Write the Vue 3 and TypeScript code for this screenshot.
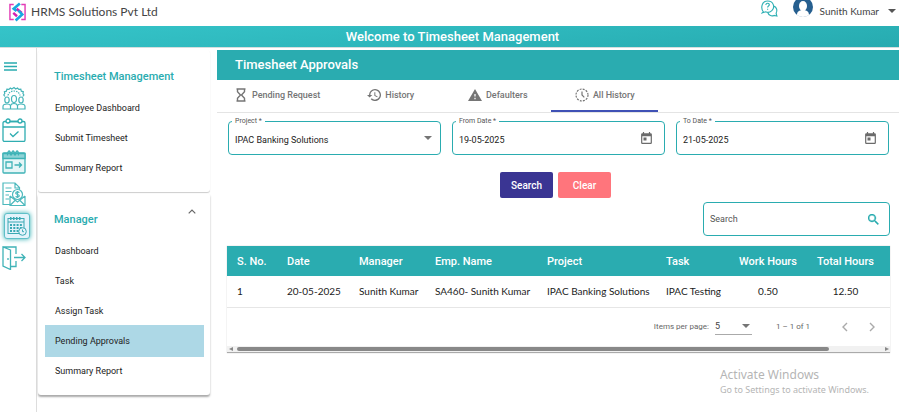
<script setup lang="ts">
import { ref } from 'vue'

interface Row {
  no: number
  date: string
  manager: string
  employee: string
  project: string
  task: string
  work: string
  total: string
}

const timesheetLinks: string[] = ['Employee Dashboard', 'Submit Timesheet', 'Summary Report']
const managerLinks: string[] = ['Dashboard', 'Task', 'Assign Task', 'Pending Approvals', 'Summary Report']
const activeLink = ref('Pending Approvals')
const tabs: string[] = ['Pending Request', 'History', 'Defaulters', 'All History']
const activeTab = ref('All History')
const project = ref('IPAC Banking Solutions')
const fromDate = ref('19-05-2025')
const toDate = ref('21-05-2025')
const query = ref('')
const pageSize = ref('5')
const columns: string[] = ['S. No.', 'Date', 'Manager', 'Emp. Name', 'Project', 'Task', 'Work Hours', 'Total Hours']
const rows: Row[] = [
  {
    no: 1,
    date: '20-05-2025',
    manager: 'Sunith Kumar',
    employee: 'SA460- Sunith Kumar',
    project: 'IPAC Banking Solutions',
    task: 'IPAC Testing',
    work: '0.50',
    total: '12.50',
  },
]

function clearFilters(): void {
  project.value = ''
  fromDate.value = ''
  toDate.value = ''
}
</script>

<template>
  <div class="app">
    <header class="topbar">
      <svg class="logo" viewBox="0 0 18 20" aria-hidden="true">
        <path d="M5 2H1v16h4M13 2h4v16h-4" fill="none" stroke="#e23bb5" stroke-width="1.500" />
        <path d="M8 6.500 13.500 11" fill="none" stroke="#d31fb0" stroke-width="2.800" />
        <path d="M11.500 1 5 6.500l3 2.500" fill="none" stroke="#19a9e0" stroke-width="2.800" />
        <path d="M10 8.500l4 4L7 19" fill="none" stroke="#19a9e0" stroke-width="2.800" />
        <path d="M4.500 11l4 3.500" fill="none" stroke="#d31fb0" stroke-width="2.600" />
      </svg>
      <span class="company">HRMS Solutions Pvt Ltd</span>
      <button class="plain help" aria-label="Help">
        <svg viewBox="0 0 18 18" fill="none" stroke="#2fb0b4" stroke-width="1.200">
          <path d="M2.500 12.500C-.5 9 .5 1 7 1s8 7 4.500 10.200C9.500 13 6.500 13.300 5 12.500L1.500 13.500z" />
          <path d="M13.500 6.500c3.500 1.300 4 5 2.500 7.500l.8 3-3-.7c-2.500 1.200-5.500.3-6.500-2.800" />
          <path d="M5.200 5.200c0-2.400 3.800-2.200 3.600 0C8.700 6.500 7 6.400 7 8M7 9.300v1" />
        </svg>
      </button>
      <button class="plain user">
        <svg class="avatar" viewBox="0 0 20 20" aria-hidden="true">
          <circle cx="10" cy="10" r="10" fill="#265f8f" />
          <ellipse cx="10" cy="9" rx="4" ry="5" fill="#fff" />
          <path d="M4 18c0-4 3-4.500 4.500-5h3c1.500.5 4.500 1 4.500 5-3 2.500-9 2.500-12 0z" fill="#fff" />
        </svg>
        <span>Sunith Kumar</span>
        <svg class="caret" viewBox="0 0 8 4" aria-hidden="true"><path d="M0 0h8L4 4z" fill="#555" /></svg>
      </button>
    </header>

    <div class="banner">Welcome to Timesheet Management</div>

    <div class="body">
      <nav class="rail" aria-label="Modules">
        <button class="plain menu" aria-label="Menu">
          <svg viewBox="0 0 13 9"><path d="M0 1h13M0 4.500h13M0 8h13" stroke="#2aacb0" stroke-width="1.400" /></svg>
        </button>
        <a href="#" aria-label="Employees">
          <svg viewBox="0 0 24 24" fill="none" stroke="#45b5b9" stroke-width="1.200">
            <path d="M3 10.500 1.800 9l1-1.500-.4-1.800 2-.5.500-2 2 .2L8.300 2l1.500 1L12 1.500 13.700 3l1.800-1 1.300 1.400 2-.2.500 2 2 .5-.4 1.800 1 1.500-1.200 1.500" />
            <path d="M6 9.500C7 3.500 17 3.500 18 9.500" stroke-dasharray="1.500 1" />
            <ellipse cx="5" cy="14" rx="2.200" ry="3" />
            <ellipse cx="12" cy="13" rx="2.500" ry="3.500" />
            <ellipse cx="19" cy="14" rx="2.200" ry="3" />
            <path d="M1 23v-2.500c0-2 2-2.500 4-2.500s3 .5 3.500 1.500C9 18 10.500 17.500 12 17.500s3 .5 3.500 2C16 18.500 17 18 19 18s4 .5 4 2.500V23zM8.500 19.500V23M15.500 19.500V23" />
          </svg>
        </a>
        <a href="#" aria-label="Attendance">
          <svg viewBox="0 0 24 24" fill="none" stroke="#2fadb1" stroke-width="1.300">
            <rect x="1" y="3.500" width="22" height="20" rx="1.500" />
            <path d="M1 9h22M8 3.500h8" />
            <circle cx="6" cy="3" r="2" fill="#fff" />
            <circle cx="18" cy="3" r="2" fill="#fff" />
            <path d="m8 15.500 3 3 5.500-5" />
          </svg>
        </a>
        <a href="#" aria-label="Leave">
          <svg viewBox="0 0 24 24" fill="none" stroke="#3fb3b7" stroke-width="1.300">
            <rect x="1" y="3" width="22" height="20" rx="1" fill="#e5f6f7" />
            <path d="M1 3.500h22v5H1z" fill="#8ed3d6" />
            <path d="M5.500 5.500c0-6 3-6 3 0M9.500 5.500c0-6 3-6 3 0M13.500 5.500c0-6 3-6 3 0" />
            <path d="M4 12h6v6H4zM12.500 15h7M17 12.500l2.500 2.500-2.500 2.500" />
          </svg>
        </a>
        <a href="#" aria-label="Payroll">
          <svg viewBox="0 0 24 24" fill="none" stroke="#4cb9bd" stroke-width="1.200">
            <path d="M8 22.500H1V1h12l4.500 4.500V9M13 1v5h4.500M3.500 6h6M3.500 9.500h6M3.500 13H7M3.500 17H7" />
            <path d="M8 14v9.500h15V14M8 14l7.500 6L23 14M8 23.500l5-5M23 23.500l-5-5" />
            <circle cx="15.500" cy="12.500" r="5" fill="#fff" />
            <path d="M17.300 10.800c-.5-1.200-3.600-1.200-3.600.4s3.600 1 3.600 2.600-3.100 1.600-3.600.4M15.500 9v7" />
          </svg>
        </a>
        <a href="#" class="current" aria-label="Timesheet">
          <svg viewBox="0 0 20 20" fill="none" stroke="#3aa9b4" stroke-width="1">
            <rect x="1" y="2.500" width="16" height="15" />
            <path d="M1 6h16" />
            <path d="M3 2.500h12" stroke-width="3" stroke-dasharray="1.500 1.500" />
            <path d="M3 9h12M3 12h12M3 15h10" stroke-width="2" stroke-dasharray="2 1.300" />
            <circle cx="15.500" cy="15.500" r="3.800" fill="#e3f3fb" />
            <path d="M15.500 13.500v2.200H17" />
          </svg>
        </a>
        <a href="#" aria-label="Log out">
          <svg viewBox="0 0 24 24" fill="none" stroke="#3fb3b7" stroke-width="1.300">
            <path d="M8.500 4 1 1v19l7.500 3.500zM1 1h13v7M14 15v5.500H8.500M6 12v2" />
            <path d="M12 11.500h11M19.500 8l3.500 3.500-3.500 3.500" />
          </svg>
        </a>
      </nav>

      <aside class="sidebar">
        <section class="group">
          <h2>Timesheet Management</h2>
          <a v-for="link in timesheetLinks" :key="link" href="#">{{ link }}</a>
        </section>
        <section class="group manager">
          <h2>
            Manager
            <svg class="chevron" viewBox="0 0 8 5" aria-hidden="true">
              <path d="M.7 4.300 4 1l3.300 3.300" fill="none" stroke="#666" stroke-width="1.200" />
            </svg>
          </h2>
          <a
            v-for="link in managerLinks"
            :key="link"
            href="#"
            :class="{ active: link === activeLink }"
            @click.prevent="activeLink = link"
          >{{ link }}</a>
        </section>
      </aside>

      <main class="main">
        <h1>Timesheet Approvals</h1>

        <div class="tabs" role="tablist">
          <button
            v-for="(tab, i) in tabs"
            :key="tab"
            class="plain tab"
            role="tab"
            :aria-selected="tab === activeTab"
            @click="activeTab = tab"
          >
            <svg v-if="i === 0" viewBox="0 0 14 14" fill="none" stroke="#757575" stroke-width="1.400">
              <path d="M2.500 1h9M2.500 13h9M3.500 1v2.800L6.500 7l-3 3.200V13M10.500 1v2.800L7.500 7l3 3.200V13" />
            </svg>
            <svg v-else-if="i === 1" viewBox="1 3 21 18" fill="#757575">
              <path d="M13 3a9 9 0 0 0-9 9H1l3.900 3.900L9 12H6a7 7 0 1 1 2.060 4.940l-1.420 1.420A9 9 0 1 0 13 3zm-1 5v5l4.280 2.540.72-1.210-3.500-2.080V8H12z" />
            </svg>
            <svg v-else-if="i === 2" viewBox="1 2 22 19" fill="#757575">
              <path d="M1 21h22L12 2 1 21zm12-3h-2v-2h2v2zm0-4h-2v-4h2v4z" />
            </svg>
            <svg v-else viewBox="0 0 14 14" fill="none" stroke="#757575" stroke-width="1.200">
              <circle cx="7" cy="7" r="6" stroke-dasharray="2 1.140" />
              <path d="M7 3.500V7l2.300 2.300" />
            </svg>
            {{ tab }}
          </button>
        </div>

        <form class="filters" @submit.prevent>
          <div class="fields">
            <div class="field">
              <label for="project">Project *</label>
              <select id="project" v-model="project">
                <option>IPAC Banking Solutions</option>
              </select>
              <svg class="caret" viewBox="0 0 8 4" aria-hidden="true"><path d="M0 0h8L4 4z" fill="#757575" /></svg>
            </div>
            <div class="field">
              <label for="from">From Date *</label>
              <input id="from" v-model="fromDate" type="text" />
              <button class="plain pick" type="button" aria-label="Pick from date">
                <svg viewBox="3 1 18 20" fill="#6b6b6b"><path d="M19 3h-1V1h-2v2H8V1H6v2H5a2 2 0 0 0-2 2v14a2 2 0 0 0 2 2h14a2 2 0 0 0 2-2V5a2 2 0 0 0-2-2zm0 16H5V8h14v11zM7 10h5v5H7z" /></svg>
              </button>
            </div>
            <div class="field">
              <label for="to">To Date *</label>
              <input id="to" v-model="toDate" type="text" />
              <button class="plain pick" type="button" aria-label="Pick to date">
                <svg viewBox="3 1 18 20" fill="#6b6b6b"><path d="M19 3h-1V1h-2v2H8V1H6v2H5a2 2 0 0 0-2 2v14a2 2 0 0 0 2 2h14a2 2 0 0 0 2-2V5a2 2 0 0 0-2-2zm0 16H5V8h14v11zM7 10h5v5H7z" /></svg>
              </button>
            </div>
          </div>
          <div class="actions">
            <button class="action" type="submit">Search</button>
            <button class="action clear" type="button" @click="clearFilters">Clear</button>
          </div>
        </form>

        <div class="field search">
          <input v-model="query" type="text" placeholder="Search" aria-label="Search" />
          <svg class="glass" viewBox="3 3 18 18" fill="#2aacb0" aria-hidden="true">
            <path d="M15.500 14h-.79l-.28-.27A6.500 6.500 0 1 0 13.730 14.430l.27.28v.79l5 4.990L20.490 19l-4.990-5zm-6 0a4.500 4.500 0 1 1 0-9 4.500 4.500 0 0 1 0 9z" stroke="#2aacb0" stroke-width=".6" />
          </svg>
        </div>

        <div class="panel">
          <table>
            <colgroup>
              <col class="c1" /><col class="c2" /><col class="c3" /><col class="c4" />
              <col class="c5" /><col class="c6" /><col class="c7" /><col class="c8" />
            </colgroup>
            <thead>
              <tr>
                <th v-for="column in columns" :key="column">{{ column }}</th>
              </tr>
            </thead>
            <tbody>
              <tr v-for="row in rows" :key="row.no">
                <td v-for="(value, key) in row" :key="key">{{ value }}</td>
              </tr>
            </tbody>
          </table>
          <div class="paginator">
            <label for="size">Items per page:</label>
            <div class="size">
              <select id="size" v-model="pageSize">
                <option>5</option>
                <option>10</option>
              </select>
              <svg class="caret" viewBox="0 0 8 4" aria-hidden="true"><path d="M0 0h8L4 4z" fill="#757575" /></svg>
            </div>
            <span class="range">1 – 1 of 1</span>
            <button class="plain step" aria-label="Previous page">
              <svg viewBox="0 0 6 10"><path d="M5 1 1 5l4 4" fill="none" stroke="#aaa" stroke-width="1.400" /></svg>
            </button>
            <button class="plain step" aria-label="Next page">
              <svg viewBox="0 0 6 10"><path d="m1 1 4 4-4 4" fill="none" stroke="#aaa" stroke-width="1.400" /></svg>
            </button>
          </div>
          <div class="scrollbar" aria-hidden="true">
            <svg viewBox="0 0 4 4"><path d="M4 0v4L0 2z" fill="#888" /></svg>
            <div class="track"><div class="thumb"></div></div>
            <svg viewBox="0 0 4 4"><path d="M0 0v4l4-2z" fill="#888" /></svg>
          </div>
        </div>

        <div class="notice">
          <strong>Activate Windows</strong>
          <span>Go to Settings to activate Windows.</span>
        </div>
      </main>
    </div>
  </div>
</template>

<style>
body {
  margin: 0;
  background: #fff;
}
</style>

<style scoped>
.app {
  min-height: 100vh;
  display: flex;
  flex-direction: column;
  padding-right: 1px;
  box-sizing: border-box;
  overflow: hidden;
  font-family: Roboto, "Liberation Sans", sans-serif;
  font-size: 9px;
  color: #222;
}
.app *,
.app *::before {
  box-sizing: border-box;
}
svg {
  display: block;
  flex: none;
}
a {
  color: inherit;
  text-decoration: none;
}
.plain {
  display: flex;
  align-items: center;
  padding: 0;
  border: 0;
  background: none;
  font: inherit;
  color: inherit;
}
.topbar {
  display: flex;
  align-items: center;
  height: 26px;
  padding: 0 3px 4px 9px;
  font-family: Lato, "Open Sans", sans-serif;
  color: #444;
}
.logo {
  width: 17px;
  height: 20px;
  margin-top: 2px;
}
.company {
  margin-left: 5px;
  font-size: 12px;
}
.help {
  margin-left: auto;
}
.help svg {
  width: 17px;
  height: 17px;
  margin-top: -6px;
}
.user {
  margin-left: 15px;
  font-size: 10px;
  line-height: 16px;
  margin-top: -8px;
}
.user span {
  margin: 8px 9px 0 7px;
}
.user .caret {
  margin-top: 8px;
}
.avatar {
  width: 20px;
  height: 20px;
}
.caret {
  width: 8px;
  height: 4px;
}
.banner {
  height: 22px;
  padding-left: 6px;
  border-bottom: 1px solid #d5dede;
  background: linear-gradient(175deg, #35c4c9, #27abb0);
  color: #fff;
  font-size: 13px;
  font-weight: 500;
  line-height: 21px;
  text-align: center;
}
.body {
  flex: 1;
  display: flex;
}
.rail {
  flex: none;
  width: 37px;
  border-right: 1px solid #ddd;
  padding: 14px 0 0 2px;
  display: flex;
  flex-direction: column;
  gap: 8px;
}
.rail a svg {
  width: 24px;
  height: 24px;
}
.menu {
  padding: 0 0 7px 2px;
}
.menu svg {
  width: 13px;
  height: 9px;
}
.rail .current {
  width: 26px;
  margin: -1px 0 -1px 2px;
  padding: 2px;
  border: 1px solid #5fbfc8;
  border-radius: 3px;
  background: #e3f3fb;
  box-shadow: 0 0 5px #2aacb0;
}
.rail .current svg {
  width: 20px;
  height: 20px;
}
.sidebar {
  flex: none;
  width: 173px;
  padding: 2px 0 0 1px;
}
.group {
  height: 142px;
  padding: 11px 6px 0 7px;
  border-radius: 3px;
  box-shadow: 0 1px 1px #ccc;
}
.group h2 {
  display: flex;
  justify-content: space-between;
  margin: 0 0 -1px;
  padding: 0 8px 0 9px;
  font-size: 11px;
  font-weight: 500;
  line-height: 32px;
  color: #2aacb0;
}
.group a {
  display: block;
  padding-left: 10px;
  line-height: 32px;
  margin-bottom: -2px;
}
.group .active {
  background: #add8e6;
}
.manager {
  margin-top: 1px;
  height: 202px;
  box-shadow: 0 2px 2px #aaa;
}
.chevron {
  width: 8px;
  height: 5px;
  margin-top: 5px;
}
.main {
  flex: 1;
  min-width: 0;
  display: flex;
  flex-direction: column;
  margin-left: 7px;
  padding-top: 2px;
}
h1 {
  margin: 0;
  padding-left: 18px;
  background: #2aacb0;
  color: #fff;
  font-size: 13px;
  font-weight: 500;
  line-height: 30px;
}
.tabs {
  display: flex;
  height: 33px;
  border-bottom: 1px solid #e4e4e4;
}
.tab {
  gap: 4px;
  min-width: 107px;
  padding: 0 17px;
  justify-content: center;
  font-weight: 500;
  color: #757575;
  border-bottom: 2px solid transparent;
  white-space: nowrap;
}
.tab svg {
  width: 14px;
  height: 14px;
}
.tab[aria-selected="true"] {
  border-color: #3f51b5;
}
.filters {
  padding: 8px 10px 0 11px;
}
.fields {
  display: grid;
  grid-template-columns: repeat(3, 1fr);
  gap: 11px;
}
.field {
  position: relative;
  display: flex;
  align-items: center;
  height: 34px;
  padding: 0 8px 0 6px;
  border: 1px solid #2aacb0;
  border-radius: 4px;
}
.field label {
  position: absolute;
  top: -5px;
  left: 3px;
  padding: 0 3px;
  background: #fff;
  font-size: 7px;
  line-height: 9px;
  color: #555;
}
.field input,
.field select,
.size select {
  flex: 1;
  min-width: 0;
  padding: 0;
  border: 0;
  outline: 0;
  appearance: none;
  background: none;
  font: inherit;
  color: inherit;
}
.field input,
.field select {
  margin-top: 4px;
}
.pick {
  margin-right: 4px;
}
.pick svg {
  width: 11px;
  height: 12px;
}
.actions {
  display: flex;
  justify-content: center;
  gap: 5px;
  margin-top: 17px;
  padding-right: 6px;
}
.action {
  width: 53px;
  height: 26px;
  padding: 0;
  border: 0;
  border-radius: 2px;
  background: #3a3593;
  color: #fff;
  font: 500 10px Roboto, sans-serif;
}
.clear {
  background: #ff757c;
}
.search {
  align-self: flex-end;
  width: 187px;
  margin: 4px 9px 0 0;
}
.search input {
  margin: 0;
}
.search input::placeholder {
  color: #555;
  opacity: 1;
}
.glass {
  width: 11px;
  height: 11px;
  margin-right: 2px;
}
.panel {
  margin: 10px 9px 0 10px;
  border-bottom: 1px solid #aaa;
  box-shadow: 0 0 1px #bbb;
}
table {
  width: 100%;
  table-layout: fixed;
  border-collapse: collapse;
}
.c1 { width: 50px; }
.c2 { width: 72px; }
.c3 { width: 76px; }
.c4 { width: 112px; }
.c5 { width: 119px; }
.c6 { width: 73px; }
.c7 { width: 78px; }
.c8 { width: 83px; }
th,
td {
  height: 30px;
  padding: 0 0 0 10px;
  text-align: left;
  white-space: nowrap;
}
th {
  background: #2aacb0;
  color: #fff;
  font-size: 11px;
  font-weight: 500;
}
td {
  height: 31px;
  padding-bottom: 1px;
  border-bottom: 1px solid #e6e6e6;
  font-family: Lato, "Open Sans", sans-serif;
  font-size: 10px;
}
th:nth-child(n + 7),
td:nth-child(n + 7) {
  padding-left: 0;
  text-align: center;
}
th:last-child,
td:last-child {
  padding-right: 6px;
}
.paginator {
  display: flex;
  align-items: center;
  justify-content: flex-end;
  height: 38px;
  padding-right: 15px;
  font-size: 8px;
  color: #666;
}
.size {
  display: flex;
  align-items: center;
  width: 37px;
  height: 17px;
  margin: 0 24px 0 6px;
  padding-right: 2px;
  border-bottom: 1px solid #aaa;
  color: #444;
  font-size: 9px;
}
.range {
  margin-right: 32px;
}
.step svg {
  width: 6px;
  height: 10px;
}
.step + .step {
  margin-left: 21px;
}
.scrollbar {
  display: flex;
  align-items: center;
  gap: 4px;
  height: 6px;
  padding: 0 1px 0 2px;
  background: #f1f1f1;
}
.scrollbar svg {
  width: 4px;
  height: 4px;
}
.track {
  flex: 1;
}
.thumb {
  width: 92%;
  height: 4px;
  border-radius: 2px;
  background: #888;
}
.notice {
  align-self: flex-end;
  display: flex;
  flex-direction: column;
  margin: 14px 30px 0 0;
  font-family: "Noto Sans", "Open Sans", sans-serif;
  font-size: 9px;
  line-height: 14px;
  color: #b5b5b5;
}
.notice strong {
  font-size: 12px;
  font-weight: 400;
  line-height: 16px;
}
</style>
